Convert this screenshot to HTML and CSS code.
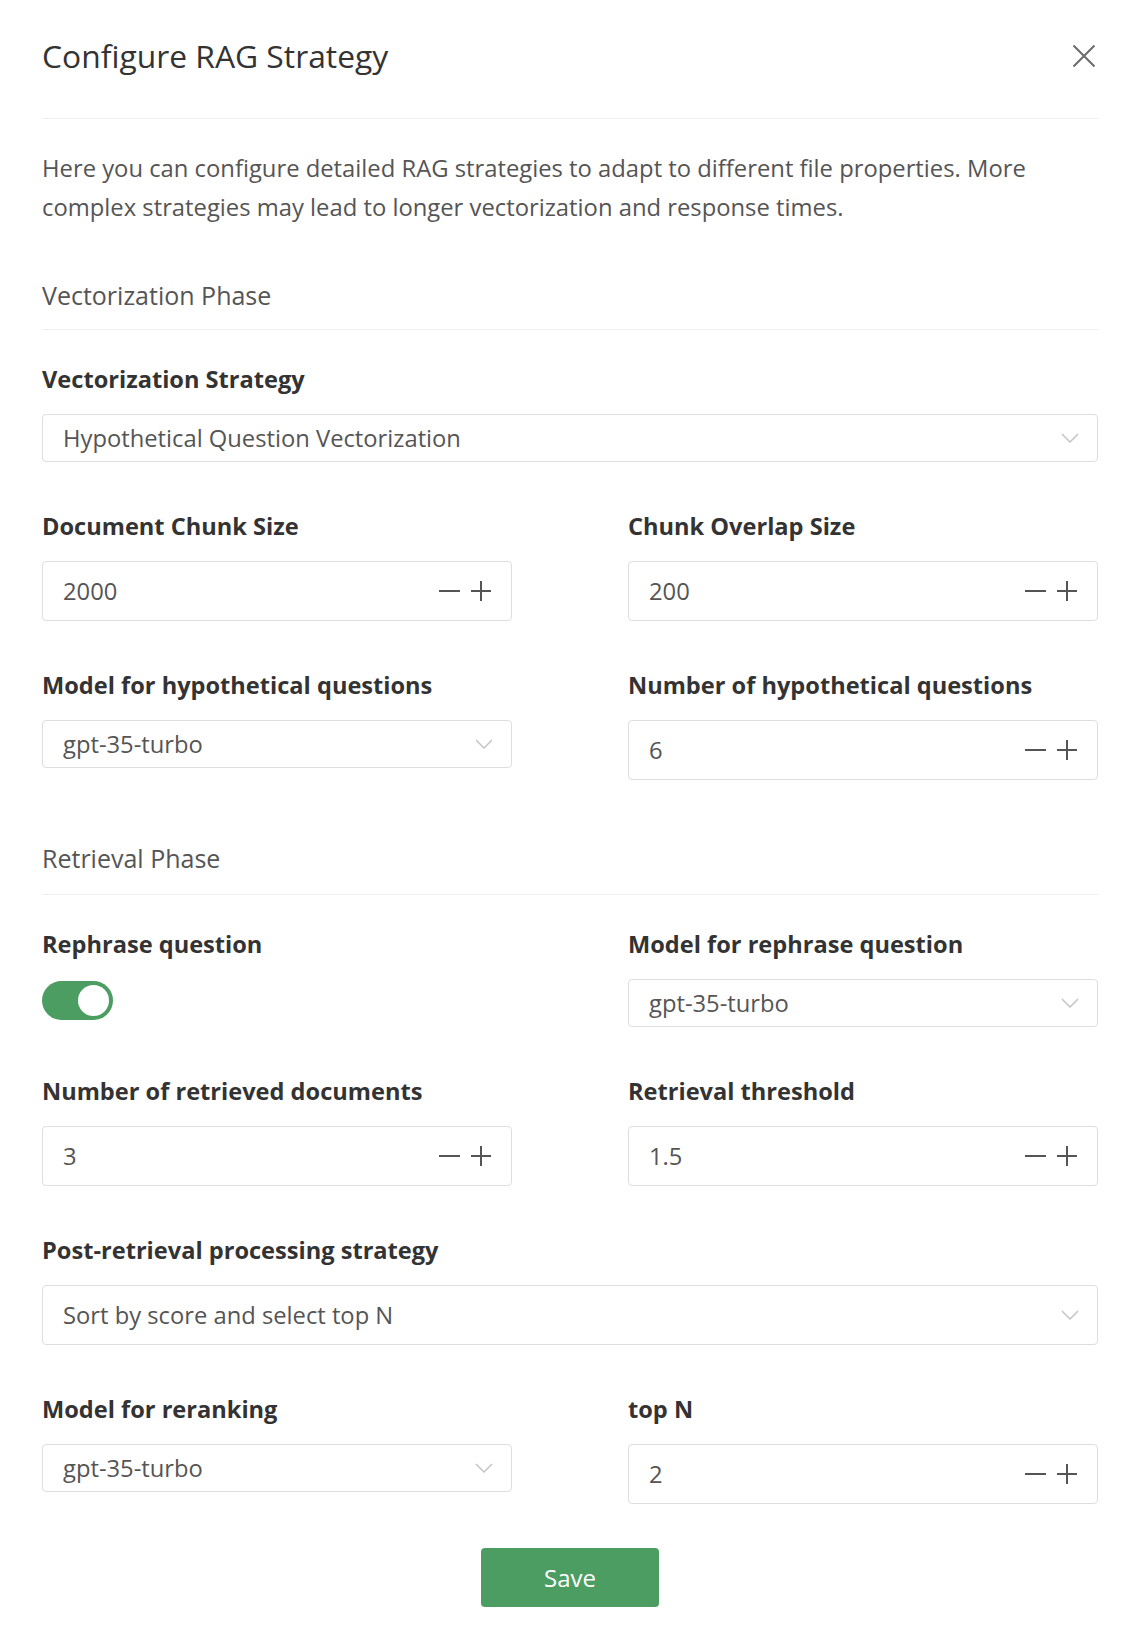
FILE: index.html
```html
<!DOCTYPE html>
<html lang="en">
<head>
<meta charset="utf-8">
<title>Configure RAG Strategy</title>
<link rel="stylesheet" href="styles.css">
</head>
<body>
<div class="modal">
  <header class="modal-header">
    <h1 class="modal-title">Configure RAG Strategy</h1>
    <button class="close-btn" aria-label="Close">
      <svg width="24" height="24" viewBox="0 0 24 24"><path d="M1.5 1.5L22.5 22.5M22.5 1.5L1.5 22.5" stroke="#6b6b6b" stroke-width="2" fill="none"/></svg>
    </button>
  </header>

  <p class="desc">Here you can configure detailed RAG strategies to adapt to different file properties. More complex strategies may lead to longer vectorization and response times.</p>

  <section class="phase">
    <h2 class="phase-title">Vectorization Phase</h2>
    <div class="form">
      <div class="item">
        <label class="label">Vectorization Strategy</label>
        <div class="select"><span class="value">Hypothetical Question Vectorization</span><svg class="chev" width="18" height="10" viewBox="0 0 18 10"><path d="M1 1L9 9L17 1" fill="none" stroke="#c4c4c4" stroke-width="1.5"/></svg></div>
      </div>
      <div class="row">
        <div class="item">
          <label class="label">Document Chunk Size</label>
          <div class="number"><span class="value">2000</span><span class="steps"><svg width="21" height="20" viewBox="0 0 21 20"><path d="M0 10H21" stroke="#555" stroke-width="2"/></svg><svg width="20" height="20" viewBox="0 0 20 20"><path d="M0 10H20M10 0V20" stroke="#555" stroke-width="2"/></svg></span></div>
        </div>
        <div class="item">
          <label class="label">Chunk Overlap Size</label>
          <div class="number"><span class="value">200</span><span class="steps"><svg width="21" height="20" viewBox="0 0 21 20"><path d="M0 10H21" stroke="#555" stroke-width="2"/></svg><svg width="20" height="20" viewBox="0 0 20 20"><path d="M0 10H20M10 0V20" stroke="#555" stroke-width="2"/></svg></span></div>
        </div>
      </div>
      <div class="row">
        <div class="item">
          <label class="label">Model for hypothetical questions</label>
          <div class="select"><span class="value">gpt-35-turbo</span><svg class="chev" width="18" height="10" viewBox="0 0 18 10"><path d="M1 1L9 9L17 1" fill="none" stroke="#c4c4c4" stroke-width="1.5"/></svg></div>
        </div>
        <div class="item">
          <label class="label">Number of hypothetical questions</label>
          <div class="number"><span class="value">6</span><span class="steps"><svg width="21" height="20" viewBox="0 0 21 20"><path d="M0 10H21" stroke="#555" stroke-width="2"/></svg><svg width="20" height="20" viewBox="0 0 20 20"><path d="M0 10H20M10 0V20" stroke="#555" stroke-width="2"/></svg></span></div>
        </div>
      </div>
    </div>
  </section>

  <section class="phase phase-retrieval">
    <h2 class="phase-title">Retrieval Phase</h2>
    <div class="form">
      <div class="row">
        <div class="item">
          <label class="label">Rephrase question</label>
          <div class="switch"><span class="knob"></span></div>
        </div>
        <div class="item">
          <label class="label">Model for rephrase question</label>
          <div class="select"><span class="value">gpt-35-turbo</span><svg class="chev" width="18" height="10" viewBox="0 0 18 10"><path d="M1 1L9 9L17 1" fill="none" stroke="#c4c4c4" stroke-width="1.5"/></svg></div>
        </div>
      </div>
      <div class="row">
        <div class="item">
          <label class="label">Number of retrieved documents</label>
          <div class="number"><span class="value">3</span><span class="steps"><svg width="21" height="20" viewBox="0 0 21 20"><path d="M0 10H21" stroke="#555" stroke-width="2"/></svg><svg width="20" height="20" viewBox="0 0 20 20"><path d="M0 10H20M10 0V20" stroke="#555" stroke-width="2"/></svg></span></div>
        </div>
        <div class="item">
          <label class="label">Retrieval threshold</label>
          <div class="number"><span class="value">1.5</span><span class="steps"><svg width="21" height="20" viewBox="0 0 21 20"><path d="M0 10H21" stroke="#555" stroke-width="2"/></svg><svg width="20" height="20" viewBox="0 0 20 20"><path d="M0 10H20M10 0V20" stroke="#555" stroke-width="2"/></svg></span></div>
        </div>
      </div>
      <div class="item">
        <label class="label">Post-retrieval processing strategy</label>
        <div class="select select-tall"><span class="value">Sort by score and select top N</span><svg class="chev" width="18" height="10" viewBox="0 0 18 10"><path d="M1 1L9 9L17 1" fill="none" stroke="#c4c4c4" stroke-width="1.5"/></svg></div>
      </div>
      <div class="row">
        <div class="item">
          <label class="label">Model for reranking</label>
          <div class="select"><span class="value">gpt-35-turbo</span><svg class="chev" width="18" height="10" viewBox="0 0 18 10"><path d="M1 1L9 9L17 1" fill="none" stroke="#c4c4c4" stroke-width="1.5"/></svg></div>
        </div>
        <div class="item">
          <label class="label">top N</label>
          <div class="number"><span class="value">2</span><span class="steps"><svg width="21" height="20" viewBox="0 0 21 20"><path d="M0 10H21" stroke="#555" stroke-width="2"/></svg><svg width="20" height="20" viewBox="0 0 20 20"><path d="M0 10H20M10 0V20" stroke="#555" stroke-width="2"/></svg></span></div>
        </div>
      </div>
    </div>
  </section>

  <div class="footer">
    <button class="save-btn">Save</button>
  </div>
</div>
</body>
</html>
```

FILE: styles.css
```css
* {
  box-sizing: border-box;
}

html, body {
  margin: 0;
  padding: 0;
  background: #ffffff;
}

body {
  font-family: "Open Sans", "Noto Sans", sans-serif;
  color: #333333;
}

.modal {
  width: 1140px;
  padding: 0 42px 40px;
}

.modal-header {
  display: flex;
  align-items: center;
  justify-content: space-between;
  padding: 37px 0 43px;
  border-bottom: 1px solid #efefef;
}

.modal-title {
  margin: 0;
  font-size: 31.8px;
  font-weight: 400;
  line-height: 38px;
  color: #333333;
}

.close-btn {
  display: flex;
  padding: 0;
  margin: 0 2px 0 0;
  border: 0;
  background: none;
}

.desc {
  margin: 30px 0 0;
  max-width: 1036px;
  font-size: 23.8px;
  line-height: 39px;
  color: #555555;
}

.phase {
  margin-top: 51px;
}

.phase-retrieval {
  margin-top: 61px;
}

.phase-title {
  margin: 0;
  padding-bottom: 17px;
  border-bottom: 1px solid #efefef;
  font-size: 25px;
  font-weight: 400;
  line-height: 34px;
  color: #555555;
}

.phase-retrieval .phase-title {
  padding-bottom: 19px;
}

.form {
  display: flex;
  flex-direction: column;
  gap: 48px;
  padding-top: 33px;
}

.row {
  display: grid;
  grid-template-columns: 1fr 1fr;
  column-gap: 116px;
  align-items: start;
}

.item {
  display: flex;
  flex-direction: column;
  align-items: flex-start;
}

.label {
  display: block;
  margin-bottom: 19px;
  font-size: 23.6px;
  font-weight: 700;
  line-height: 32px;
  color: #333333;
}

.select,
.number {
  display: flex;
  align-items: center;
  justify-content: space-between;
  width: 100%;
  border: 1px solid #dedede;
  border-radius: 4px;
  padding: 0 20px 0 20px;
  font-size: 23.75px;
  color: #555555;
  background: #ffffff;
}

.select {
  height: 48px;
}

.select-tall {
  height: 60px;
}

.number {
  height: 60px;
}

.value {
  line-height: 30px;
}

.chev {
  display: block;
  margin-right: -2px;
}

.steps {
  display: flex;
  align-items: center;
  gap: 11px;
}

.steps svg {
  display: block;
}

.switch {
  display: flex;
  align-items: center;
  justify-content: flex-end;
  width: 71px;
  height: 39px;
  margin-top: 2px;
  padding: 0 4px;
  border-radius: 20px;
  background: #4c9d62;
}

.knob {
  width: 31px;
  height: 31px;
  border-radius: 50%;
  background: #ffffff;
}

.footer {
  display: flex;
  justify-content: center;
  margin-top: 44px;
}

.save-btn {
  width: 178px;
  height: 59px;
  border: 0;
  border-radius: 4px;
  background: #4c9d62;
  color: #ffffff;
  font-family: "Open Sans", "Noto Sans", sans-serif;
  font-size: 24px;
  line-height: 30px;
}
```
